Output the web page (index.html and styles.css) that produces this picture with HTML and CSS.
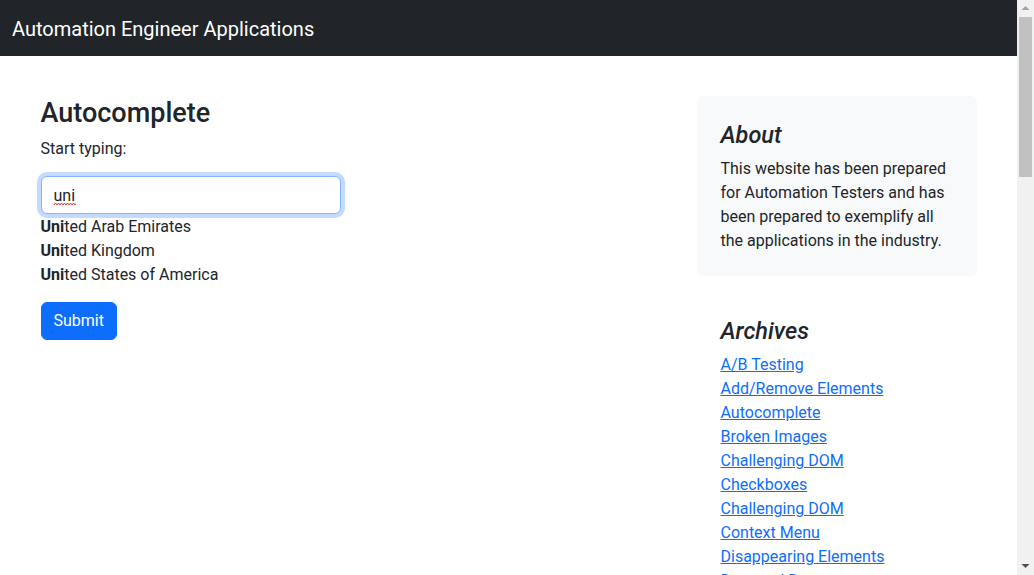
FILE: index.html
```html
<!DOCTYPE html>
<html lang="en">
<head>
<meta charset="utf-8">
<title>Autocomplete</title>
<link rel="stylesheet" href="styles.css">
</head>
<body>
<nav class="navbar">
  <div class="navbar-inner">
    <a class="brand" href="#">Automation Engineer Applications</a>
  </div>
</nav>
<main class="container">
  <div class="row">
    <div class="col-main">
      <h3 class="page-title">Autocomplete</h3>
      <p class="lead-text">Start typing:</p>
      <form class="ac-form" autocomplete="off">
        <div class="input-wrap">
          <input class="form-control is-focused" type="text" value="uni" spellcheck="false">
          <svg class="spell-mark" width="22" height="4" viewBox="0 0 22 4" aria-hidden="true">
            <polyline points="0,3 1.5,1 3,3 4.5,1 6,3 7.5,1 9,3 10.5,1 12,3 13.5,1 15,3 16.5,1 18,3 19.5,1 21,3 22,1.5" fill="none" stroke="#e23b2e" stroke-width="1"/>
          </svg>
        </div>
        <div class="suggestions">
          <div class="suggestion"><strong>Uni</strong>ted Arab Emirates</div>
          <div class="suggestion"><strong>Uni</strong>ted Kingdom</div>
          <div class="suggestion"><strong>Uni</strong>ted States of America</div>
        </div>
        <button class="btn-primary" type="button">Submit</button>
      </form>
    </div>
    <div class="col-side">
      <div class="about-box">
        <h4 class="side-title">About</h4>
        <p class="about-text">This website has been prepared for Automation Testers and has been prepared to exemplify all the applications in the industry.</p>
      </div>
      <div class="side-block">
        <h4 class="side-title">Archives</h4>
        <ol class="link-list">
          <li><a href="#">A/B Testing</a></li>
          <li><a href="#">Add/Remove Elements</a></li>
          <li><a href="#">Autocomplete</a></li>
          <li><a href="#">Broken Images</a></li>
          <li><a href="#">Challenging DOM</a></li>
          <li><a href="#">Checkboxes</a></li>
          <li><a href="#">Challenging DOM</a></li>
          <li><a href="#">Context Menu</a></li>
          <li><a href="#">Disappearing Elements</a></li>
          <li><a href="#">Drag and Drop</a></li>
          <li><a href="#">Dropdown</a></li>
          <li><a href="#">Dynamic Content</a></li>
          <li><a href="#">Dynamic Controls</a></li>
          <li><a href="#">Dynamic Loading</a></li>
          <li><a href="#">Entry Ad</a></li>
          <li><a href="#">Exit Intent</a></li>
          <li><a href="#">File Download</a></li>
          <li><a href="#">File Upload</a></li>
          <li><a href="#">Floating Menu</a></li>
          <li><a href="#">Forgot Password</a></li>
          <li><a href="#">Form Authentication</a></li>
          <li><a href="#">Frames</a></li>
          <li><a href="#">Geolocation</a></li>
          <li><a href="#">Horizontal Slider</a></li>
          <li><a href="#">Hovers</a></li>
          <li><a href="#">Infinite Scroll</a></li>
          <li><a href="#">Inputs</a></li>
          <li><a href="#">JQuery UI Menus</a></li>
          <li><a href="#">JavaScript Alerts</a></li>
          <li><a href="#">Key Presses</a></li>
          <li><a href="#">Large &amp; Deep DOM</a></li>
          <li><a href="#">Multiple Windows</a></li>
          <li><a href="#">Nested Frames</a></li>
          <li><a href="#">Notification Messages</a></li>
          <li><a href="#">Redirect Link</a></li>
          <li><a href="#">Shadow DOM</a></li>
          <li><a href="#">Shifting Content</a></li>
          <li><a href="#">Slow Resources</a></li>
          <li><a href="#">Sortable Data Tables</a></li>
          <li><a href="#">Status Codes</a></li>
          <li><a href="#">Typos</a></li>
          <li><a href="#">WYSIWYG Editor</a></li>
        </ol>
      </div>
    </div>
  </div>
</main>
<div class="fake-scrollbar" aria-hidden="true">
  <div class="sb-button">
    <svg width="17" height="17" viewBox="0 0 17 17"><polygon points="4.5,10 12.5,10 8.5,6" fill="#a3a3a3"/></svg>
  </div>
  <div class="sb-track"><div class="sb-thumb"></div></div>
  <div class="sb-button">
    <svg width="17" height="17" viewBox="0 0 17 17"><polygon points="4.5,6 12.5,6 8.5,10" fill="#505050"/></svg>
  </div>
</div>
</body>
</html>
```

FILE: styles.css
```css
* {
  box-sizing: border-box;
}

body {
  margin: 0 17px 0 0;
  font-family: Roboto, "Liberation Sans", sans-serif;
  font-size: 16px;
  line-height: 1.5;
  color: #212529;
  background: #fff;
}

.navbar {
  background: #212529;
  padding: 8px 0;
}
.navbar-inner {
  padding: 0 12px;
  display: flex;
  align-items: center;
}
.brand {
  color: #fff;
  text-decoration: none;
  font-size: 20px;
  line-height: 1.5;
  padding: 6px 0 4px;
}

.container {
  width: 960px;
  margin: 40px auto 48px;
  padding: 0 12px;
}
.row {
  display: flex;
  margin: 0 -24px;
}
.col-main {
  flex: 0 0 66.666667%;
  padding: 1px 24px 0;
}
.col-side {
  flex: 0 0 33.333333%;
  padding: 0 24px;
}

.page-title {
  margin: 0 0 8px;
  font-size: 27px;
  font-weight: 500;
  line-height: 1.2;
}
.lead-text {
  margin: 0 0 15px;
}

.input-wrap {
  position: relative;
  width: 300px;
}
.form-control {
  display: block;
  width: 300px;
  height: 38px;
  padding: 6px 12px;
  font-family: inherit;
  font-size: 16px;
  line-height: 1.5;
  color: #212529;
  background: #fff;
  border: 1px solid #ced4da;
  border-radius: 6px;
  outline: none;
}
.form-control.is-focused {
  border-color: #86b7fe;
  box-shadow: 0 0 0 4px rgba(13, 110, 253, 0.25);
}
.spell-mark {
  position: absolute;
  left: 13px;
  top: 26px;
  display: block;
}

.suggestions {
  display: flex;
  flex-direction: column;
  padding-top: 1px;
}
.suggestion strong {
  font-weight: 700;
}

.btn-primary {
  margin-top: 15px;
  display: inline-block;
  padding: 6px 12px;
  font-family: inherit;
  font-size: 16px;
  line-height: 1.5;
  color: #fff;
  background: #0d6efd;
  border: 1px solid #0d6efd;
  border-radius: 6px;
  cursor: pointer;
}

.about-box {
  padding: 25px 24px 23px;
  margin-bottom: 16px;
  background: #f8f9fa;
  border-radius: 6px;
}
.side-title {
  margin: 0 0 8px;
  font-size: 23.5px;
  font-weight: 500;
  font-style: italic;
  line-height: 1.2;
}
.about-text {
  margin: 0;
}
.side-block {
  padding: 25px 24px 24px;
}
.link-list {
  list-style: none;
  margin: 0;
  padding: 0;
}
.link-list a {
  color: #0d6efd;
  text-decoration: underline;
}

.fake-scrollbar {
  position: fixed;
  top: 0;
  right: 0;
  width: 17px;
  height: 100vh;
  background: #f1f1f1;
  display: flex;
  flex-direction: column;
}
.sb-button {
  height: 17px;
  flex: 0 0 17px;
}
.sb-button svg {
  display: block;
}
.sb-track {
  flex: 1;
  padding: 0 2px;
}
.sb-thumb {
  height: 160px;
  background: #c1c1c1;
}
```
